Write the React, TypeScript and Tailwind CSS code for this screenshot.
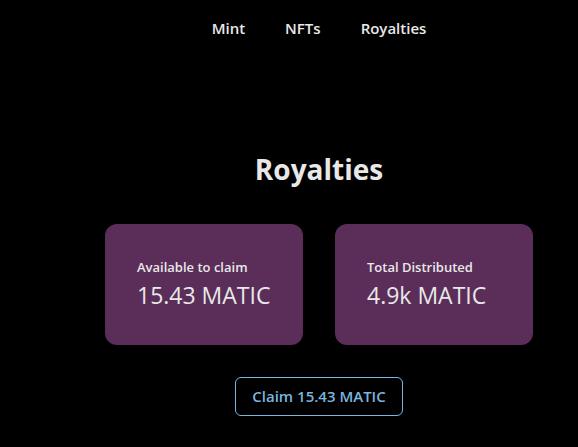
export default function App() {
  return (
    <div className="min-h-[447px] bg-black pl-[60px] text-[#e8e8e8] font-['Open_Sans',sans-serif]">
      <nav className="flex justify-center gap-10 pt-[17px] text-[15px] font-semibold">
        <a>Mint</a>
        <a>NFTs</a>
        <a>Royalties</a>
      </nav>
      <h1 className="mt-[111px] text-center text-[28px] font-bold leading-[36px]">Royalties</h1>
      <div className="mt-[37px] flex justify-center gap-8">
        {[
          ["Available to claim", "15.43 MATIC"],
          ["Total Distributed", "4.9k MATIC"],
        ].map(([label, value]) => (
          <div key={label} className="flex h-[121px] w-[198px] flex-col justify-center rounded-xl bg-[#5b2d59] px-8">
            <div className="text-[13px] font-semibold leading-5">{label}</div>
            <div className="mt-[2px] text-[23px] font-medium leading-8">{value}</div>
          </div>
        ))}
      </div>
      <div className="mt-8 flex justify-center">
        <button className="h-[39px] w-[168px] rounded-md border border-[#7bb6df] text-[15px] font-semibold text-[#7bb6df]">
          Claim 15.43 MATIC
        </button>
      </div>
    </div>
  );
}
